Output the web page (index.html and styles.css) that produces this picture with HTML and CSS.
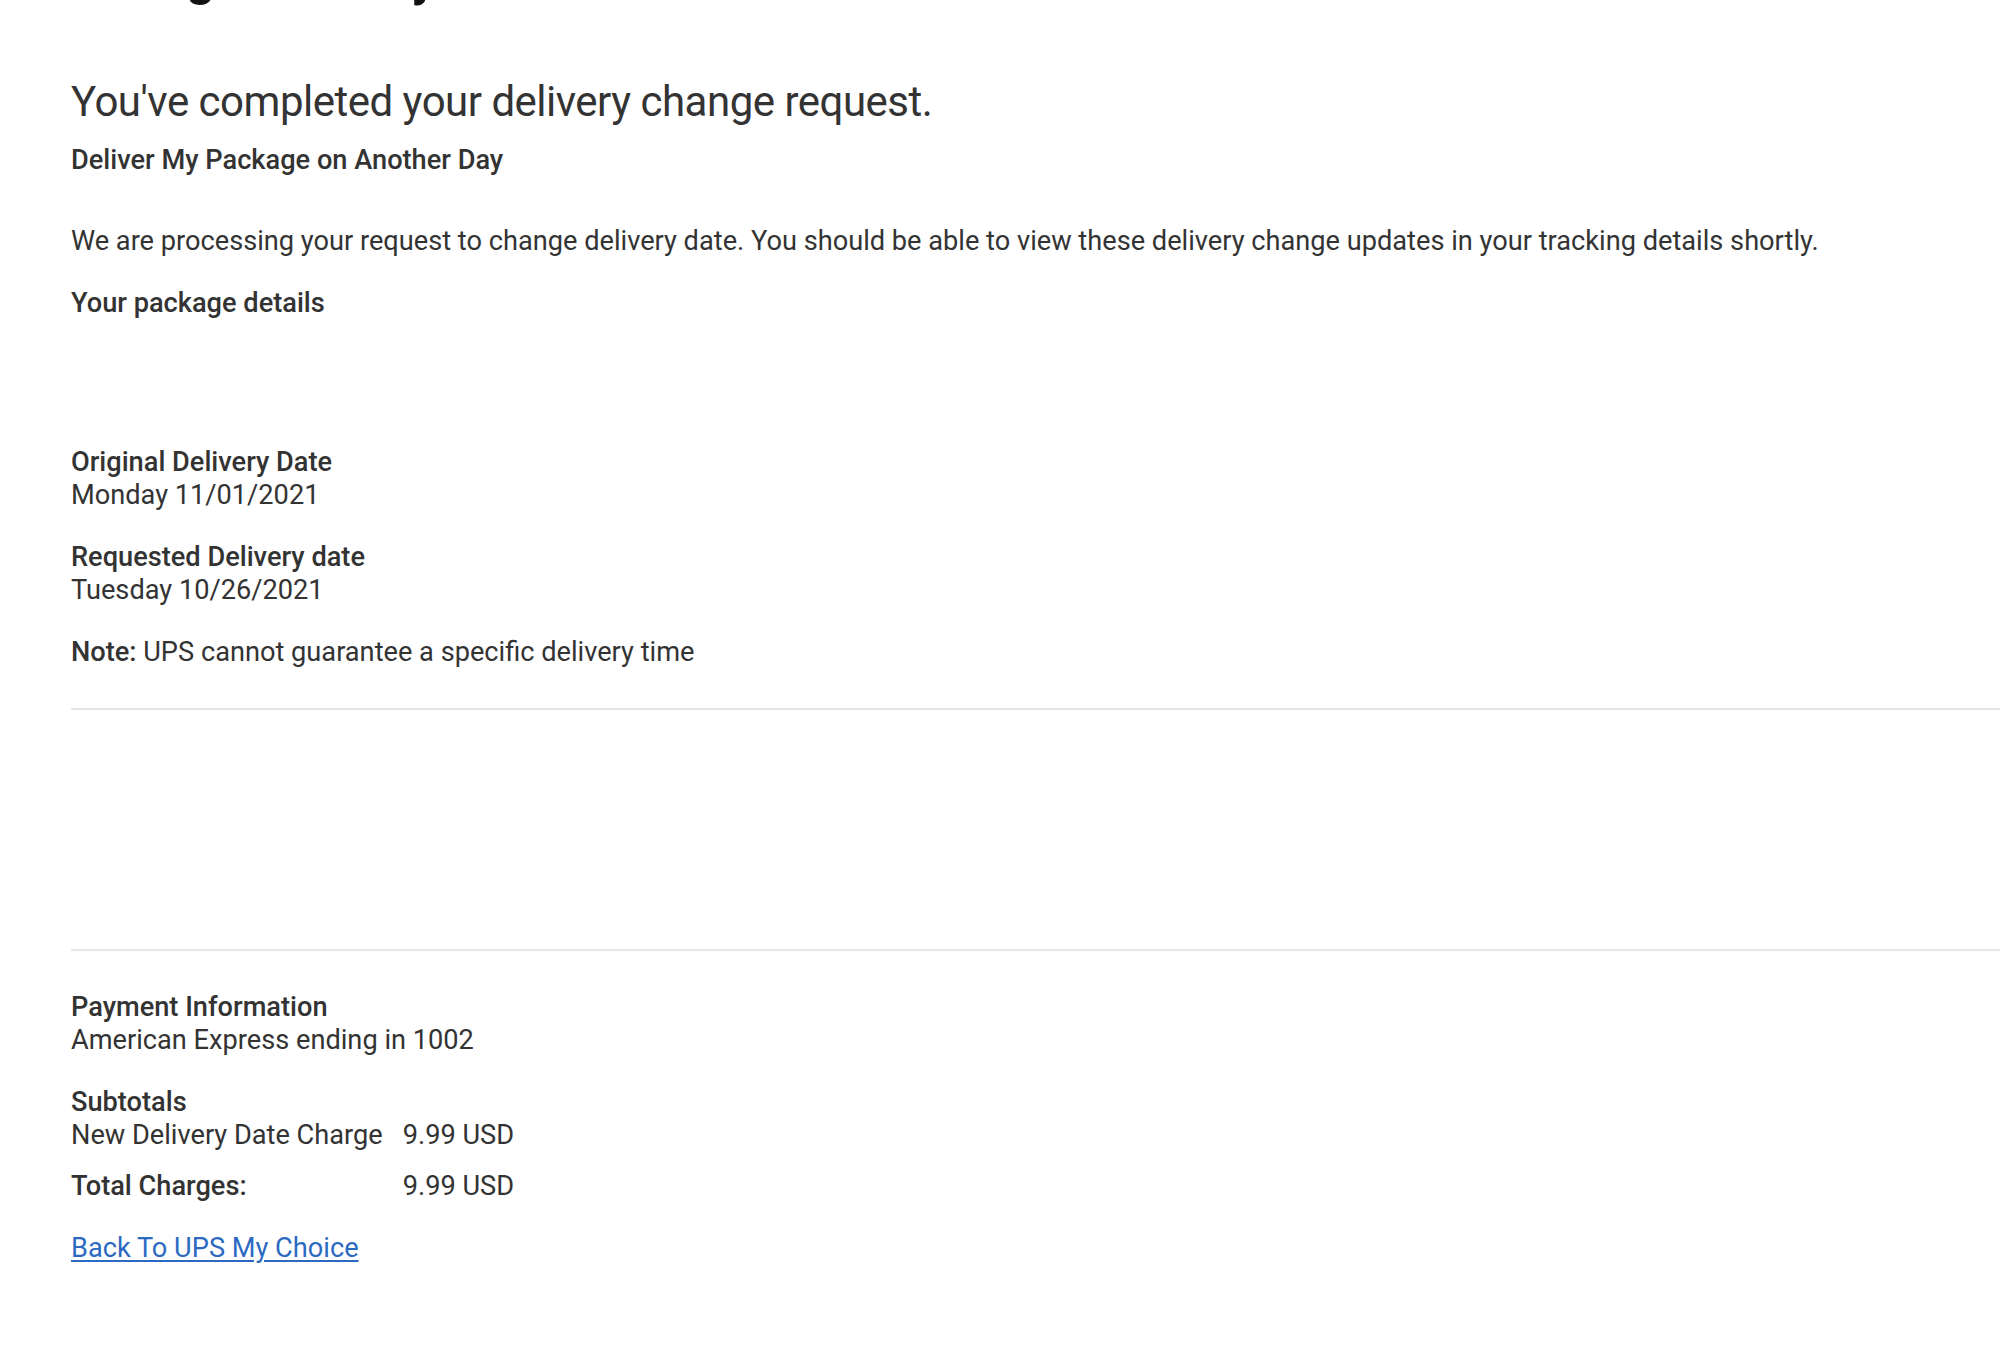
FILE: index.html
```html
<!DOCTYPE html>
<html lang="en">
<head>
<meta charset="utf-8">
<title>Change Delivery</title>
<link rel="stylesheet" href="styles.css">
</head>
<body>
<main class="page">
  <div class="page-title">Change Delivery</div>
  <h1 class="confirm-title">You've completed your delivery change request.</h1>
  <h2 class="sub-title">Deliver My Package on Another Day</h2>
  <p class="body-text msg">We are processing your request to change delivery date. You should be able to view these delivery change updates in your tracking details shortly.</p>
  <h3 class="label pkg">Your package details</h3>

  <div class="field orig">
    <div class="label">Original Delivery Date</div>
    <div class="body-text">Monday 11/01/2021</div>
  </div>
  <div class="field req">
    <div class="label">Requested Delivery date</div>
    <div class="body-text">Tuesday 10/26/2021</div>
  </div>
  <p class="body-text note"><span class="label">Note:</span> UPS cannot guarantee a specific delivery time</p>

  <hr class="divider first">
  <div class="spacer"></div>
  <hr class="divider second">

  <div class="field pay">
    <div class="label">Payment Information</div>
    <div class="body-text">American Express ending in 1002</div>
  </div>
  <div class="field subtotals">
    <div class="label">Subtotals</div>
    <div class="charges">
      <div class="body-text">New Delivery Date Charge</div>
      <div class="body-text">9.99 USD</div>
      <div class="label">Total Charges:</div>
      <div class="body-text">9.99 USD</div>
    </div>
  </div>
  <a class="back-link" href="#">Back To UPS My Choice</a>
</main>
</body>
</html>
```
FILE: styles.css
```css
html, body {
  margin: 0;
  padding: 0;
  background: #ffffff;
}
body {
  font-family: Roboto, "Liberation Sans", Arial, sans-serif;
  color: #333333;
}
.page {
  padding: 0 0 0 71px;
  display: flex;
  flex-direction: column;
  align-items: flex-start;
}
.page-title {
  font-size: 50px;
  font-weight: 700;
  color: #121212;
  line-height: 56px;
  margin-top: -50px;
}
.confirm-title {
  font-size: 42px;
  font-weight: 400;
  letter-spacing: -0.5px;
  line-height: 56px;
  margin: 68px 0 0 0;
  color: #333333;
}
.sub-title {
  font-size: 27.2px;
  font-weight: 500;
  line-height: 33px;
  margin: 14px 0 0 0;
}
.body-text {
  font-size: 27.2px;
  font-weight: 400;
  line-height: 33px;
  margin: 0;
}
.label {
  font-size: 27.2px;
  font-weight: 500;
  line-height: 33px;
  margin: 0;
}
.msg { margin-top: 47.5px; }
.pkg { margin-top: 29.5px; }
.field { display: flex; flex-direction: column; }
.orig { margin-top: 126px; }
.req { margin-top: 28.5px; }
.note { margin-top: 29.5px; }
.divider {
  align-self: stretch;
  border: 0;
  height: 2px;
  background: #e6e6e6;
  margin: 0;
}
.first { margin-top: 38.5px; }
.spacer { height: 239px; }
.pay { margin-top: 40px; }
.subtotals { margin-top: 29px; }
.charges {
  display: grid;
  grid-template-columns: max-content max-content;
  column-gap: 20px;
  row-gap: 18.5px;
}
.back-link {
  margin-top: 29px;
  font-size: 27.2px;
  line-height: 33px;
  color: #2c6ac2;
  text-decoration: underline;
  text-underline-offset: 3px;
}
```
